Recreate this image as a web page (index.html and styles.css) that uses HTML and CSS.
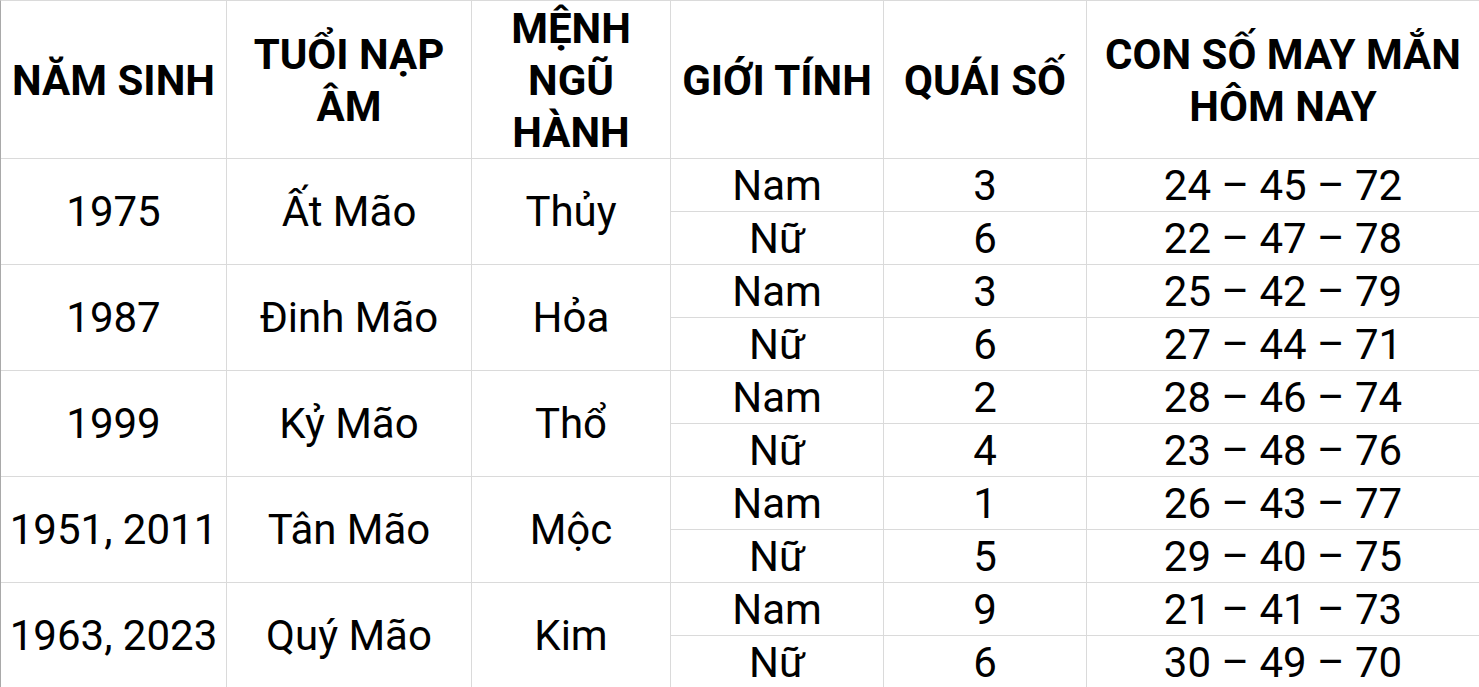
FILE: index.html
```html
<!DOCTYPE html>
<html lang="vi">
<head>
<meta charset="utf-8">
<link rel="stylesheet" href="styles.css">
</head>
<body>
<div class="table">
  <div class="cell head">NĂM SINH</div>
  <div class="cell head">TUỔI NẠP<br>ÂM</div>
  <div class="cell head">MỆNH<br>NGŨ<br>HÀNH</div>
  <div class="cell head">GIỚI TÍNH</div>
  <div class="cell head">QUÁI SỐ</div>
  <div class="cell head">CON SỐ MAY MẮN<br>HÔM NAY</div>

  <div class="cell span">1975</div>
  <div class="cell span">Ất Mão</div>
  <div class="cell span">Thủy</div>
  <div class="cell">Nam</div><div class="cell">3</div><div class="cell">24 – 45 – 72</div>
  <div class="cell">Nữ</div><div class="cell">6</div><div class="cell">22 – 47 – 78</div>

  <div class="cell span">1987</div>
  <div class="cell span">Đinh Mão</div>
  <div class="cell span">Hỏa</div>
  <div class="cell">Nam</div><div class="cell">3</div><div class="cell">25 – 42 – 79</div>
  <div class="cell">Nữ</div><div class="cell">6</div><div class="cell">27 – 44 – 71</div>

  <div class="cell span">1999</div>
  <div class="cell span">Kỷ Mão</div>
  <div class="cell span">Thổ</div>
  <div class="cell">Nam</div><div class="cell">2</div><div class="cell">28 – 46 – 74</div>
  <div class="cell">Nữ</div><div class="cell">4</div><div class="cell">23 – 48 – 76</div>

  <div class="cell span">1951, 2011</div>
  <div class="cell span">Tân Mão</div>
  <div class="cell span">Mộc</div>
  <div class="cell">Nam</div><div class="cell">1</div><div class="cell">26 – 43 – 77</div>
  <div class="cell">Nữ</div><div class="cell">5</div><div class="cell">29 – 40 – 75</div>

  <div class="cell span">1963, 2023</div>
  <div class="cell span">Quý Mão</div>
  <div class="cell span">Kim</div>
  <div class="cell">Nam</div><div class="cell">9</div><div class="cell">21 – 41 – 73</div>
  <div class="cell">Nữ</div><div class="cell">6</div><div class="cell">30 – 49 – 70</div>
</div>
</body>
</html>
```
FILE: styles.css
```css
html, body {
  margin: 0;
  padding: 0;
  background: #ffffff;
}
body {
  font-family: Roboto, "Liberation Sans", sans-serif;
  color: #000;
  overflow: hidden;
}
.table {
  display: grid;
  grid-template-columns: 226px 245px 199px 213px 203px 393px;
  grid-template-rows: 158px repeat(10, 53px);
  border-left: 1px solid #a9a9a9;
  border-top: 1px solid #dadada;
  width: max-content;
}
.cell {
  box-sizing: border-box;
  border-right: 1px solid #dadada;
  border-bottom: 1px solid #dadada;
  display: flex;
  align-items: center;
  justify-content: center;
  text-align: center;
  font-size: 42px;
  line-height: 52px;
  white-space: nowrap;
  padding-top: 1px;
}
.head {
  font-weight: 700;
  font-size: 42px;
  padding-top: 3px;
}
.span {
  grid-row: span 2;
}
```
